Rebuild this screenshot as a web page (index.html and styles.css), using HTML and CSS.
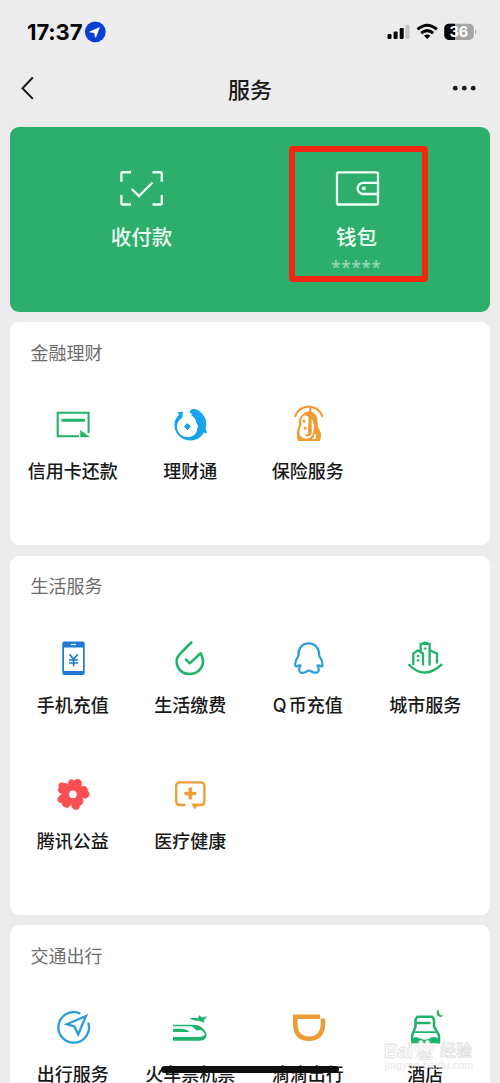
FILE: index.html
```html
<!DOCTYPE html>
<html lang="zh-CN">
<head>
<meta charset="utf-8">
<title>服务</title>
<link rel="stylesheet" href="styles.css">
</head>
<body>
<div class="screen">
  <header class="status">
    <span class="time">17:37</span>
    <svg class="loc" width="22" height="22" viewBox="84 21 22 22"><circle cx="95.3" cy="31.8" r="10.4" fill="#0a3fd6"/><path d="M100 27 89.6 31.4Q89.2 32.6 90.4 32.6L94.3 32.9 94.9 37Q95.7 38 96.2 36.8Z" fill="#fff"/></svg>
    <svg class="signals" width="92" height="22" viewBox="386 21 92 22">
      <g fill="#050505"><rect x="387.5" y="34" width="4" height="5" rx="1.2"/><rect x="393.6" y="31.4" width="4" height="7.6" rx="1.2"/><rect x="399.7" y="28" width="4" height="11" rx="1.2"/></g>
      <rect x="405.5" y="24.8" width="4" height="14.2" rx="1.2" fill="#c4c4c4"/>
      <g fill="none" stroke="#050505" stroke-width="3"><path d="M417.6 29.4Q427.2 21 436.8 29.4"/><path d="M421.2 33.2Q427.2 28 433.2 33.2"/></g><path d="M424 35.7Q427.2 33.2 430.4 35.7L427.2 39Z" fill="#050505"/>
      <rect x="444.3" y="23.7" width="29.5" height="16.2" rx="4.6" fill="#a6a6a6"/><path d="M455 23.7h-6.1a4.6 4.6 0 0 0-4.6 4.6v7a4.6 4.6 0 0 0 4.6 4.6h6.1z" fill="#050505"/>
      <path d="M475 29.3q2.8 2.5 0 5z" fill="#a6a6a6"/>
      <text class="battery" x="458.8" y="37.2" text-anchor="middle">36</text>
    </svg>
  </header>
  <nav class="nav">
    <svg width="16" height="26" viewBox="20 75 16 26" fill="none" stroke="#191919" stroke-width="2"><path d="M32.8 77.5 22.5 88.2 32.8 98.9"/></svg>
    <h1>服务</h1>
    <svg width="26" height="10" viewBox="451 83 26 10" fill="#191919"><circle cx="455.3" cy="88.2" r="2.4"/><circle cx="464.3" cy="88.2" r="2.4"/><circle cx="473.2" cy="88.2" r="2.4"/></svg>
  </nav>
  <main>
    <section class="pay">
      <div class="pay-item">
        <svg width="46" height="38" viewBox="120 170 46 38" fill="none" stroke="#eefff5" stroke-width="2.4"><path d="M132 172.3H123.6Q122.4 172.3 122.4 173.5V181.8M153.5 172.3H161.6Q162.8 172.3 162.8 173.5V181.8M122.4 195V203.3Q122.4 204.5 123.6 204.5H132M162.8 195V203.3Q162.8 204.5 161.6 204.5H153.5M132.7 189 140 196 153.5 182.5"/></svg>
        <span>收付款</span>
      </div>
      <div class="pay-item wallet">
        <svg width="46" height="38" viewBox="334 170 46 38" fill="none" stroke="#eefff5" stroke-width="2.3"><rect x="337" y="172.3" width="41" height="32.2" rx="1.7"/><path d="M378 182.8H363.2a5.6 5.6 0 0 0 0 11.2H378"/><circle cx="363.8" cy="188.4" r="1.9" fill="#eefff5" stroke="none"/></svg>
        <span>钱包</span>
        <small>*****</small>
      </div>
      <div class="highlight"></div>
    </section>

    <section class="card">
      <h2>金融理财</h2>
      <div class="grid">
        <div class="item">
          <svg viewBox="53 405 40 40"><path d="M79 437.2H57.7V413.8H88.6V434" fill="none" stroke="#20b36a" stroke-width="2.1"/><path d="M61.5 419.7H85V422.8H61.5ZM80.3 431 90 438.2H80.3Z" fill="#20b36a"/></svg>
          <span>信用卡还款</span>
        </div>
        <div class="item">
          <svg viewBox="171 405 40 40"><path d="M178.5 413.2 185.2 412.4 184.3 418.5 189.5 417.2 193.5 415.2 190.3 413.6C190.8 409.6 196 409 200 412 204.5 415 207.5 420 207.3 425.5L206.6 429.5 208.3 434.6 205 433.6C202 438.8 197 441.6 191.5 441.6 182 441.6 175.4 434.6 175.4 425.8 175.4 421.5 177.3 418 180.3 415.7Z" fill="#18a4ed"/><path d="M184.8 407H190.3L190.6 413.8Q191 416 194.2 417.8 197.2 420 197.5 424L199 427.2 198.2 429.7C198 435 193.7 438 188.5 438 182.5 438 178 433.5 178 428 178 423.7 180.3 420.3 183.2 419Z" fill="#fff"/><path d="M188.4 424.6 191.3 427.6 188.4 430.6 185.4 427.6Z" fill="#18a4ed" stroke="#18a4ed"/></svg>
          <span>理财通</span>
        </div>
        <div class="item">
          <svg viewBox="288 405 40 40"><path d="M303.5 414.5C309 410.5 316 412.8 317.3 419.5 318 424.5 317.3 427.2 319.6 431 322 435.5 321 438.5 320 442H298L296.8 436.5Q296.5 431 299 426 297.8 419 303.5 414.5Z" fill="#ee9d35"/><path d="M301.4 420Q302.2 417 305 416.3L308.7 418V433.5Q307.5 436.5 304.5 435.3 306 438.5 309.5 437 312.2 435.5 311.7 430V419.5Q314.5 425 313.8 431 313.6 435.5 310.5 438.5 304.5 441.5 299.8 436.5 299 430.5 301.2 426.8ZM314.7 434.5Q317 436.5 315.7 440H312Q314.4 438 314.7 434.5Z" fill="#fff"/><circle cx="304" cy="422" r="1.6" fill="#ee9d35"/><path d="m303.5 427 4 2.2-3 1.8z" fill="#ee9d35"/><path d="M295.2 418C300.5 404.5 317 404.5 322.3 418" fill="none" stroke="#fff" stroke-width="4.5"/><path d="M295.2 417C300.5 404.5 317 404.5 322.3 417M310.5 408 309 433" fill="none" stroke="#ee9d35" stroke-width="2.2" stroke-linecap="round"/></svg>
          <span>保险服务</span>
        </div>
      </div>
    </section>

    <section class="card">
      <h2>生活服务</h2>
      <div class="grid">
        <div class="item">
          <svg viewBox="53 638 40 40"><path d="M64.3 641.5H82.7Q84.7 641.5 84.7 643.5V673Q84.7 675 82.7 675H64.3Q62.3 675 62.3 673V643.5Q62.3 641.5 64.3 641.5ZM64 647.5V671H83V647.5Z" fill="#1e79d1" fill-rule="evenodd"/><path d="M71 644.5H76" stroke="#fff" stroke-width="1.2"/><path d="M69.5 654.2 73.6 659.4 77.7 654.2M69 660H78.2M69 663H78.2M73.6 659.4V666.3" stroke="#1e79d1" stroke-width="1.7" fill="none"/></svg>
          <span>手机充值</span>
        </div>
        <div class="item">
          <svg viewBox="171 638 40 40" fill="none" stroke="#20b36a" stroke-width="2.6" stroke-linecap="round" stroke-linejoin="round"><path d="M192.3 642.5 180.5 654.4C174 662 179.5 674 190.7 674 201.5 674 207.5 663.5 201.6 653.3L190.7 663.4 187 659.7"/></svg>
          <span>生活缴费</span>
        </div>
        <div class="item">
          <svg viewBox="288 638 40 40" fill="none" stroke="#2a9edb" stroke-width="2.2" stroke-linejoin="round"><path d="M308.7 643.3C301.7 643.3 298 648.8 298.3 656.2Q295.2 660.5 295.1 664.7 295.5 667.8 298 665.6L300.4 665.4Q297.7 671.4 300.8 672.6 304.7 673.5 308 670.7H310Q313.5 673.5 317.2 672.4 320.2 671 317.5 665.4L319.7 665.6Q322.5 667.8 322.5 664.7 322.5 660.5 319.3 656.2C319.5 648.8 315.5 643.3 308.7 643.3Z"/></svg>
          <span><b class="latin">Q</b>币充值</span>
        </div>
        <div class="item">
          <svg viewBox="406 638 40 40" fill="none" stroke="#20b36a" stroke-width="2.3"><path d="M414.3 665V653.5L418.8 650.4 424 653.5V665.5M421.6 651.5V643.9H430.6V665.5M430.6 650.2 438 653.5V663.5M409.5 664.2Q425.5 681 443 664.2M423.5 643.5Q426.2 641.9 428.8 643.5"/><path d="M417.8 656.2h2.6M417.8 660.4h2.6M425 648.5h2.4" stroke-width="2.2"/></svg>
          <span>城市服务</span>
        </div>
        <div class="item">
          <svg viewBox="53 774 40 40"><path d="M68.6 781.5C70 778.5 73 779.5 74 781 77 777.5 82.2 780 81.6 783.7Q81.3 785.5 80.8 787.2C83.5 785.4 87.7 786.5 87.4 790.5 90.7 793.5 89 797.5 85.5 798.3L82 797.7C83.7 800.3 83.5 804 80 805.3 79.5 809 76.8 810.8 73.7 808.7 71.3 807.5 72 805.3 71.5 803.4 70.3 805.8 68.2 808.5 65.3 807 62.3 806.7 62 804.2 62.3 802.8 57.8 802.9 56.8 799.4 58.7 797Q60.2 795 62.8 794.2C59 793.3 56.8 790.2 59.2 787.3 58 783.4 61 781.7 64 783.4 66.5 782.8 68.7 784.5 69.8 787.2 68.5 785.3 67.8 783.4 68.6 781.5Z" fill="#fa4f53" stroke="#fa4f53" stroke-width=".7"/><circle cx="72.9" cy="794.4" r="3.8" fill="#fff"/></svg>
          <span>腾讯公益</span>
        </div>
        <div class="item">
          <svg viewBox="171 774 40 40"><path d="M186.5 805H181Q177.2 805 177.2 801.2V786Q177.2 782.3 181 782.3H201.6Q205.4 782.3 205.4 786V801.2Q205.4 805 201.6 805H198" fill="none" stroke="#ee9d35" stroke-width="2.3"/><path d="M192.5 803.8H199.5L196 809ZM189.8 787.8h3v4.2h4.2v3h-4.2v4.2h-3V795h-4.2v-3h4.2Z" fill="#ee9d35" stroke="#ee9d35" stroke-width=".4"/></svg>
          <span>医疗健康</span>
        </div>
      </div>
    </section>

    <section class="card">
      <h2>交通出行</h2>
      <div class="grid">
        <div class="item">
          <svg viewBox="53 1007 40 40" fill="none" stroke="#2a9edb" stroke-width="2.3"><path d="M80.3 1013.6A15.3 15.3 0 1 0 88.2 1022.5"/><path d="M86 1016 66.8 1024.2 74.4 1026.5 78.2 1034.5Z"/></svg>
          <span>出行服务</span>
        </div>
        <div class="item">
          <svg viewBox="171 1007 40 40" fill="#20b36a"><path d="M174 1026.3V1024.8H194.5C201.5 1024.8 206.7 1029.8 207.7 1034.8Q207.3 1040.7 201 1040.7H174V1037H200.5Q204 1036.8 206 1034.7 205 1031.5 202 1030L197.8 1030.6 192.8 1026.3ZM174 1028.8H181Q187 1028.8 190.8 1032H174ZM190.3 1018.2Q195 1017.3 199 1018.3L200.2 1015.2 203.1 1017.6 207.8 1016.2Q207.5 1018.6 204.7 1020L205.8 1022.5 199.4 1020.7Q195 1021 190.3 1018.2Z"/></svg>
          <span>火车票机票</span>
        </div>
        <div class="item">
          <svg viewBox="288 1007 40 40" fill="none" stroke="#ee9d35" stroke-width="4.6"><path d="M320 1016.8H295.3V1023.5Q295.3 1038.7 309 1038.7T323 1023.5V1018.5"/></svg>
          <span>滴滴出行</span>
        </div>
        <div class="item">
          <svg viewBox="406 1007 40 40"><path d="M413.2 1043.5V1035L416.5 1026.7V1019.5L418.5 1016.7H433L435 1019.5V1026.7L440 1035V1043.5M416.5 1023H431.5" fill="none" stroke="#20b36a" stroke-width="2.5"/><path d="M414 1031.3H439V1033H414ZM412.3 1043.3Q413 1037 417 1037 421 1038 424 1039.5 428 1040.5 432 1037.5 439.3 1035 441 1043.3ZM439.9 1009.3Q439 1015.7 444.7 1015.6 441.5 1018.5 438.4 1015.6 436.2 1011.5 439.9 1009.3Z" fill="#20b36a"/></svg>
          <span>酒店</span>
        </div>
      </div>
    </section>
  </main>
  <div class="home-bar"></div>
  <svg class="watermark" width="92" height="36" viewBox="382 1038 92 36">
    <text class="brand" x="384" y="1057.5" textLength="29">Bai</text>
    <g class="paw"><ellipse cx="421" cy="1043.5" rx="2.4" ry="3.2"/><ellipse cx="427.5" cy="1043.5" rx="2.4" ry="3.2"/><ellipse cx="416.8" cy="1048" rx="2" ry="3"/><ellipse cx="432" cy="1048" rx="2" ry="3"/><path d="M424.3 1047C419 1049 414.5 1057 418 1059.5H431C434.5 1057 429.5 1049 424.3 1047Z"/></g>
    <text class="du" x="418.5" y="1057.5">du</text>
    <text class="brand cn" x="440" y="1056" textLength="32">经验</text>
    <text class="url" x="385" y="1069" textLength="88">jingyan.baidu.com</text>
  </svg>
</div>
</body>
</html>
```

FILE: styles.css
```css
* { box-sizing: border-box; }
body {
  margin: 0;
  background: #ececec;
  color: #191919;
  font-family: "Noto Sans CJK SC", sans-serif;
}
.screen { position: relative; height: 1083px; overflow: hidden; }
.status {
  display: flex;
  align-items: center;
  height: 64px;
  padding: 0 22px 0 27px;
}
.time {
  width: 57px;
  font: 700 22px/24px Inter, sans-serif;
  letter-spacing: -0.1px;
  color: #050505;
}
.signals { margin-left: auto; }
.battery { font: 700 14.5px Inter, sans-serif; fill: #fff; }
.nav {
  display: flex;
  align-items: center;
  justify-content: space-between;
  height: 48px;
  padding: 0 23px 0 20px;
}
.nav h1 { margin: 0 0 1px 13px; font-size: 22px; line-height: 30px; font-weight: 500; }
main { display: flex; flex-direction: column; gap: 10.5px; padding: 15px 10px 0; }
.pay {
  position: relative;
  display: flex;
  flex: none;
  height: 184.5px;
  padding: 43px 26px 0 24px;
  border-radius: 9px;
  background: #2dae6b;
  color: #eefff5;
}
.pay-item { display: flex; flex: 1; flex-direction: column; align-items: center; }
.pay-item span { margin-top: 13px; font-size: 20.5px; line-height: 30px; font-weight: 500; }
.pay-item small {
  margin-top: 5px;
  font: 600 17px/24px "Noto Sans", sans-serif;
  letter-spacing: 0.8px;
  color: #91d5b1;
}
.highlight {
  position: absolute;
  left: 279px;
  top: 19px;
  width: 139px;
  height: 135.5px;
  border: 6px solid #f52612;
  border-radius: 4px;
}
.card { flex: none; padding: 17.5px 6px 45.5px 4px; border-radius: 9px; background: #fff; }
.card h2 { margin: 0 0 0 16.5px; font-size: 18px; line-height: 24px; font-weight: 400; color: #6c6c6c; }
.grid { display: grid; grid-template-columns: repeat(4, 117.5px); }
.item {
  display: flex;
  flex-direction: column;
  align-items: center;
  height: 136px;
  padding-top: 40.5px;
}
.item svg { width: 40px; height: 40px; }
.item span { margin-top: 14px; font-size: 18px; line-height: 24px; font-weight: 500; white-space: nowrap; }
.latin { margin-right: 2px; font: 500 18px/1 Inter, sans-serif; }
.home-bar {
  position: absolute;
  left: 161px;
  top: 1066px;
  width: 178px;
  height: 6.5px;
  border-radius: 4px;
  background: #101010;
}
.watermark { position: absolute; left: 382px; top: 1038px; opacity: 0.85; }
.watermark text, .paw { fill: #fff; stroke: #dcdcdc; stroke-width: 0.8px; }
.watermark .brand { font: 700 20px "Liberation Sans", sans-serif; }
.watermark .cn { font: 500 16px "Noto Sans CJK SC", sans-serif; }
.du { font: 700 10px "Liberation Sans", sans-serif; }
.url { font: 10.5px "Liberation Sans", sans-serif; }
.watermark .url { fill: #e3e3e3; stroke: none; }
```
